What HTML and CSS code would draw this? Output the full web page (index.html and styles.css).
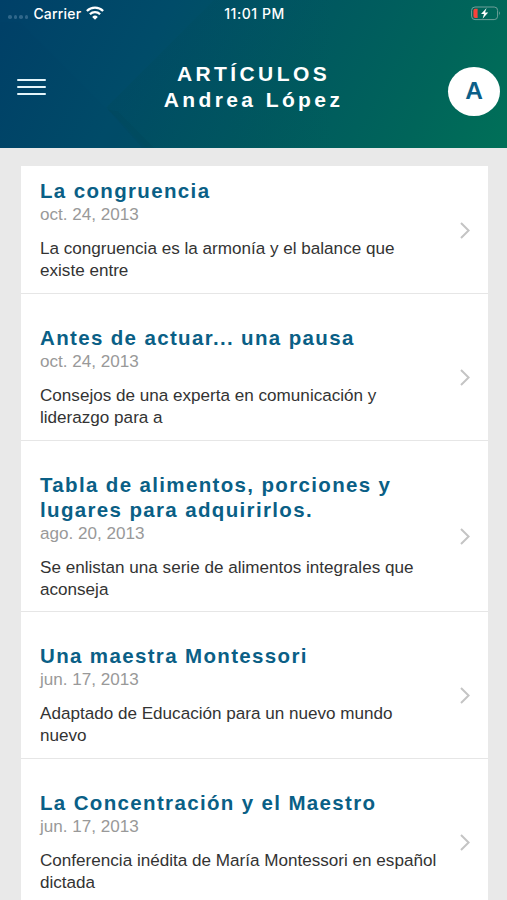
FILE: index.html
```
<!DOCTYPE html>
<html lang="es">
<head>
    <meta charset="UTF-8">
    <meta name="viewport" content="width=device-width, initial-scale=1.0">
    <title>Artículos</title>
    <link rel="stylesheet" href="styles.css">
</head>
<body>

    <header class="header">
        <svg class="header-bg" viewBox="0 0 507 148" preserveAspectRatio="none">
            <defs>
                <linearGradient id="fade" x1="0" y1="0" x2="1" y2="0">
                    <stop offset="0" stop-color="#00453f" stop-opacity="0.12"/>
                    <stop offset="1" stop-color="#00453f" stop-opacity="0"/>
                </linearGradient>
            </defs>
            <path d="M20 22 L106 108 L146 148 L0 148 L0 22 Z" fill="#003a60" opacity="0.08"/>
            <path d="M214 0 L106 108 L146 148 L340 148 L340 0 Z" fill="url(#fade)"/>
            <path d="M108 110 L118 112 L154 148 L142 148 Z" fill="#00323f" opacity="0.09"/>
        </svg>

        <div class="status-bar">
            <div class="status-left">
                <span class="dots"><i></i><i></i><i></i><i></i></span>
                <span class="carrier">Carrier</span>
                <svg class="wifi" width="18" height="14" viewBox="0 0 18 14" fill="none" stroke="#fff" stroke-width="2.3">
                    <path d="M0.9 5 A11.5 11.5 0 0 1 17.1 5"/>
                    <path d="M3.9 8.2 A7.3 7.3 0 0 1 14.1 8.2"/>
                    <path d="M9 13.7 L6.2 10.9 A4 4 0 0 1 11.8 10.9 Z" fill="#fff" stroke="none"/>
                </svg>
            </div>
            <span class="time">11:01 PM</span>
            <svg class="battery" width="30" height="15" viewBox="0 0 30 15">
                <rect x="0.6" y="1" width="26" height="12.6" rx="3.4" fill="none" stroke="#6fa09a" stroke-width="1"/>
                <path d="M28 5.2 Q29.8 7.3 28 9.4 Z" fill="#8fb5ae"/>
                <path d="M4.2 2.7 H6.6 V12 H4.2 Q2.4 12 2.4 10 V4.7 Q2.4 2.7 4.2 2.7 Z" fill="#f8423a"/>
                <path d="M15.6 1.9 L10 8.1 H13 L11.6 12.8 L17.2 6.4 H14 Z" fill="#fff"/>
            </svg>
        </div>

        <div class="nav">
            <button class="menu" aria-label="Menú"><span></span><span></span><span></span></button>
            <h1 class="nav-title">ARTÍCULOS<br>Andrea López</h1>
            <div class="avatar">A</div>
        </div>
    </header>

    <main class="list">
        <a class="item">
            <div class="item-text">
                <h2>La congruencia</h2>
                <div class="date">oct. 24, 2013</div>
                <p>La congruencia es la armonía y el balance que existe entre</p>
            </div>
            <svg class="chevron" viewBox="0 0 10 17"><path d="M1 1 L8.6 8.5 L1 16"/></svg>
        </a>
        <a class="item">
            <div class="item-text">
                <h2>Antes de actuar... una pausa</h2>
                <div class="date">oct. 24, 2013</div>
                <p>Consejos de una experta en comunicación y liderazgo para a</p>
            </div>
            <svg class="chevron" viewBox="0 0 10 17"><path d="M1 1 L8.6 8.5 L1 16"/></svg>
        </a>
        <a class="item">
            <div class="item-text">
                <h2>Tabla de alimentos, porciones y lugares para adquirirlos.</h2>
                <div class="date">ago. 20, 2013</div>
                <p>Se enlistan una serie de alimentos integrales que aconseja</p>
            </div>
            <svg class="chevron" viewBox="0 0 10 17"><path d="M1 1 L8.6 8.5 L1 16"/></svg>
        </a>
        <a class="item">
            <div class="item-text">
                <h2>Una maestra Montessori</h2>
                <div class="date">jun. 17, 2013</div>
                <p>Adaptado de Educación para un nuevo mundo nuevo</p>
            </div>
            <svg class="chevron" viewBox="0 0 10 17"><path d="M1 1 L8.6 8.5 L1 16"/></svg>
        </a>
        <a class="item">
            <div class="item-text">
                <h2>La Concentración y el Maestro</h2>
                <div class="date">jun. 17, 2013</div>
                <p>Conferencia inédita de María Montessori en español dictada</p>
            </div>
            <svg class="chevron" viewBox="0 0 10 17"><path d="M1 1 L8.6 8.5 L1 16"/></svg>
        </a>
    </main>

</body>
</html>
```
FILE: styles.css
```
* {
    box-sizing: border-box;
}
body {
    margin: 0;
    height: 900px;
    overflow: hidden;
    background-color: #e9e9e9;
    font-family: "Liberation Sans", Arial, sans-serif;
}
.header {
    position: relative;
    height: 147.5px;
    background: linear-gradient(118deg, #004068 0%, #004c69 30%, #00595f 58%, #00655a 82%, #007058 100%);
    color: #fff;
}
.header-bg {
    position: absolute;
    inset: 0;
    width: 100%;
    height: 100%;
}
/* Barra de estado */
.status-bar {
    position: relative;
    display: grid;
    grid-template-columns: 1fr auto 1fr;
    align-items: center;
    height: 26px;
    padding: 0 6px 0 8px;
    font-family: Inter, sans-serif;
    font-size: 14px;
    font-weight: 500;
}
.status-left {
    display: flex;
    align-items: center;
}
.dots {
    display: flex;
    gap: 2px;
    margin: 8px 5px 0 0;
}
.dots i {
    width: 3.6px;
    height: 3.6px;
    border-radius: 50%;
    background-color: #2f678a;
}
.carrier {
    letter-spacing: 0.2px;
}
.wifi {
    margin-left: 5px;
}
.time {
    letter-spacing: 0.55px;
}
.battery {
    justify-self: end;
}
/* Navegación */
.nav {
    position: relative;
    display: grid;
    grid-template-columns: 60px 1fr 60px;
    align-items: center;
    height: 122px;
}
.menu {
    display: flex;
    flex-direction: column;
    gap: 5px;
    width: 29px;
    margin: 0 0 0 16.5px;
    padding: 0;
    border: none;
    background: none;
}
.menu span {
    height: 2.3px;
    border-radius: 1px;
    background-color: #e4f5fa;
}
.nav-title {
    margin: 0;
    font-size: 21px;
    line-height: 26px;
    letter-spacing: 3.4px;
    text-align: center;
}
.avatar {
    display: flex;
    justify-content: center;
    align-items: center;
    width: 52px;
    height: 49px;
    margin: 8px 0 0 1px;
    border-radius: 50%;
    background-color: #fff;
    color: #0c5f88;
    font-size: 24.5px;
    font-weight: bold;
}
/* Lista de artículos */
.list {
    margin: 18.5px 19px 0 20.5px;
    background-color: #fff;
}
.item {
    display: flex;
    align-items: center;
    justify-content: space-between;
    padding: 12px 18px 10.9px 19.5px;
    border-bottom: 1px solid #e6e6e6;
}
.item:first-child {
    padding-top: 13.3px;
}
.item + .item {
    border-top: 20px solid #fff;
}
.item-text {
    width: 402px;
}
.item h2 {
    margin: 0;
    color: #0a5f86;
    font-size: 20.5px;
    line-height: 24.5px;
    letter-spacing: 1.35px;
}
.date {
    margin-top: 0.5px;
    color: #999;
    font-size: 17.1px;
    line-height: 22px;
}
.item p {
    margin: 12px 0 0;
    color: #333;
    font-size: 17.1px;
    line-height: 22px;
}
.chevron {
    width: 10px;
    height: 17px;
    fill: none;
    stroke: #c4c4c4;
    stroke-width: 2;
}
```
